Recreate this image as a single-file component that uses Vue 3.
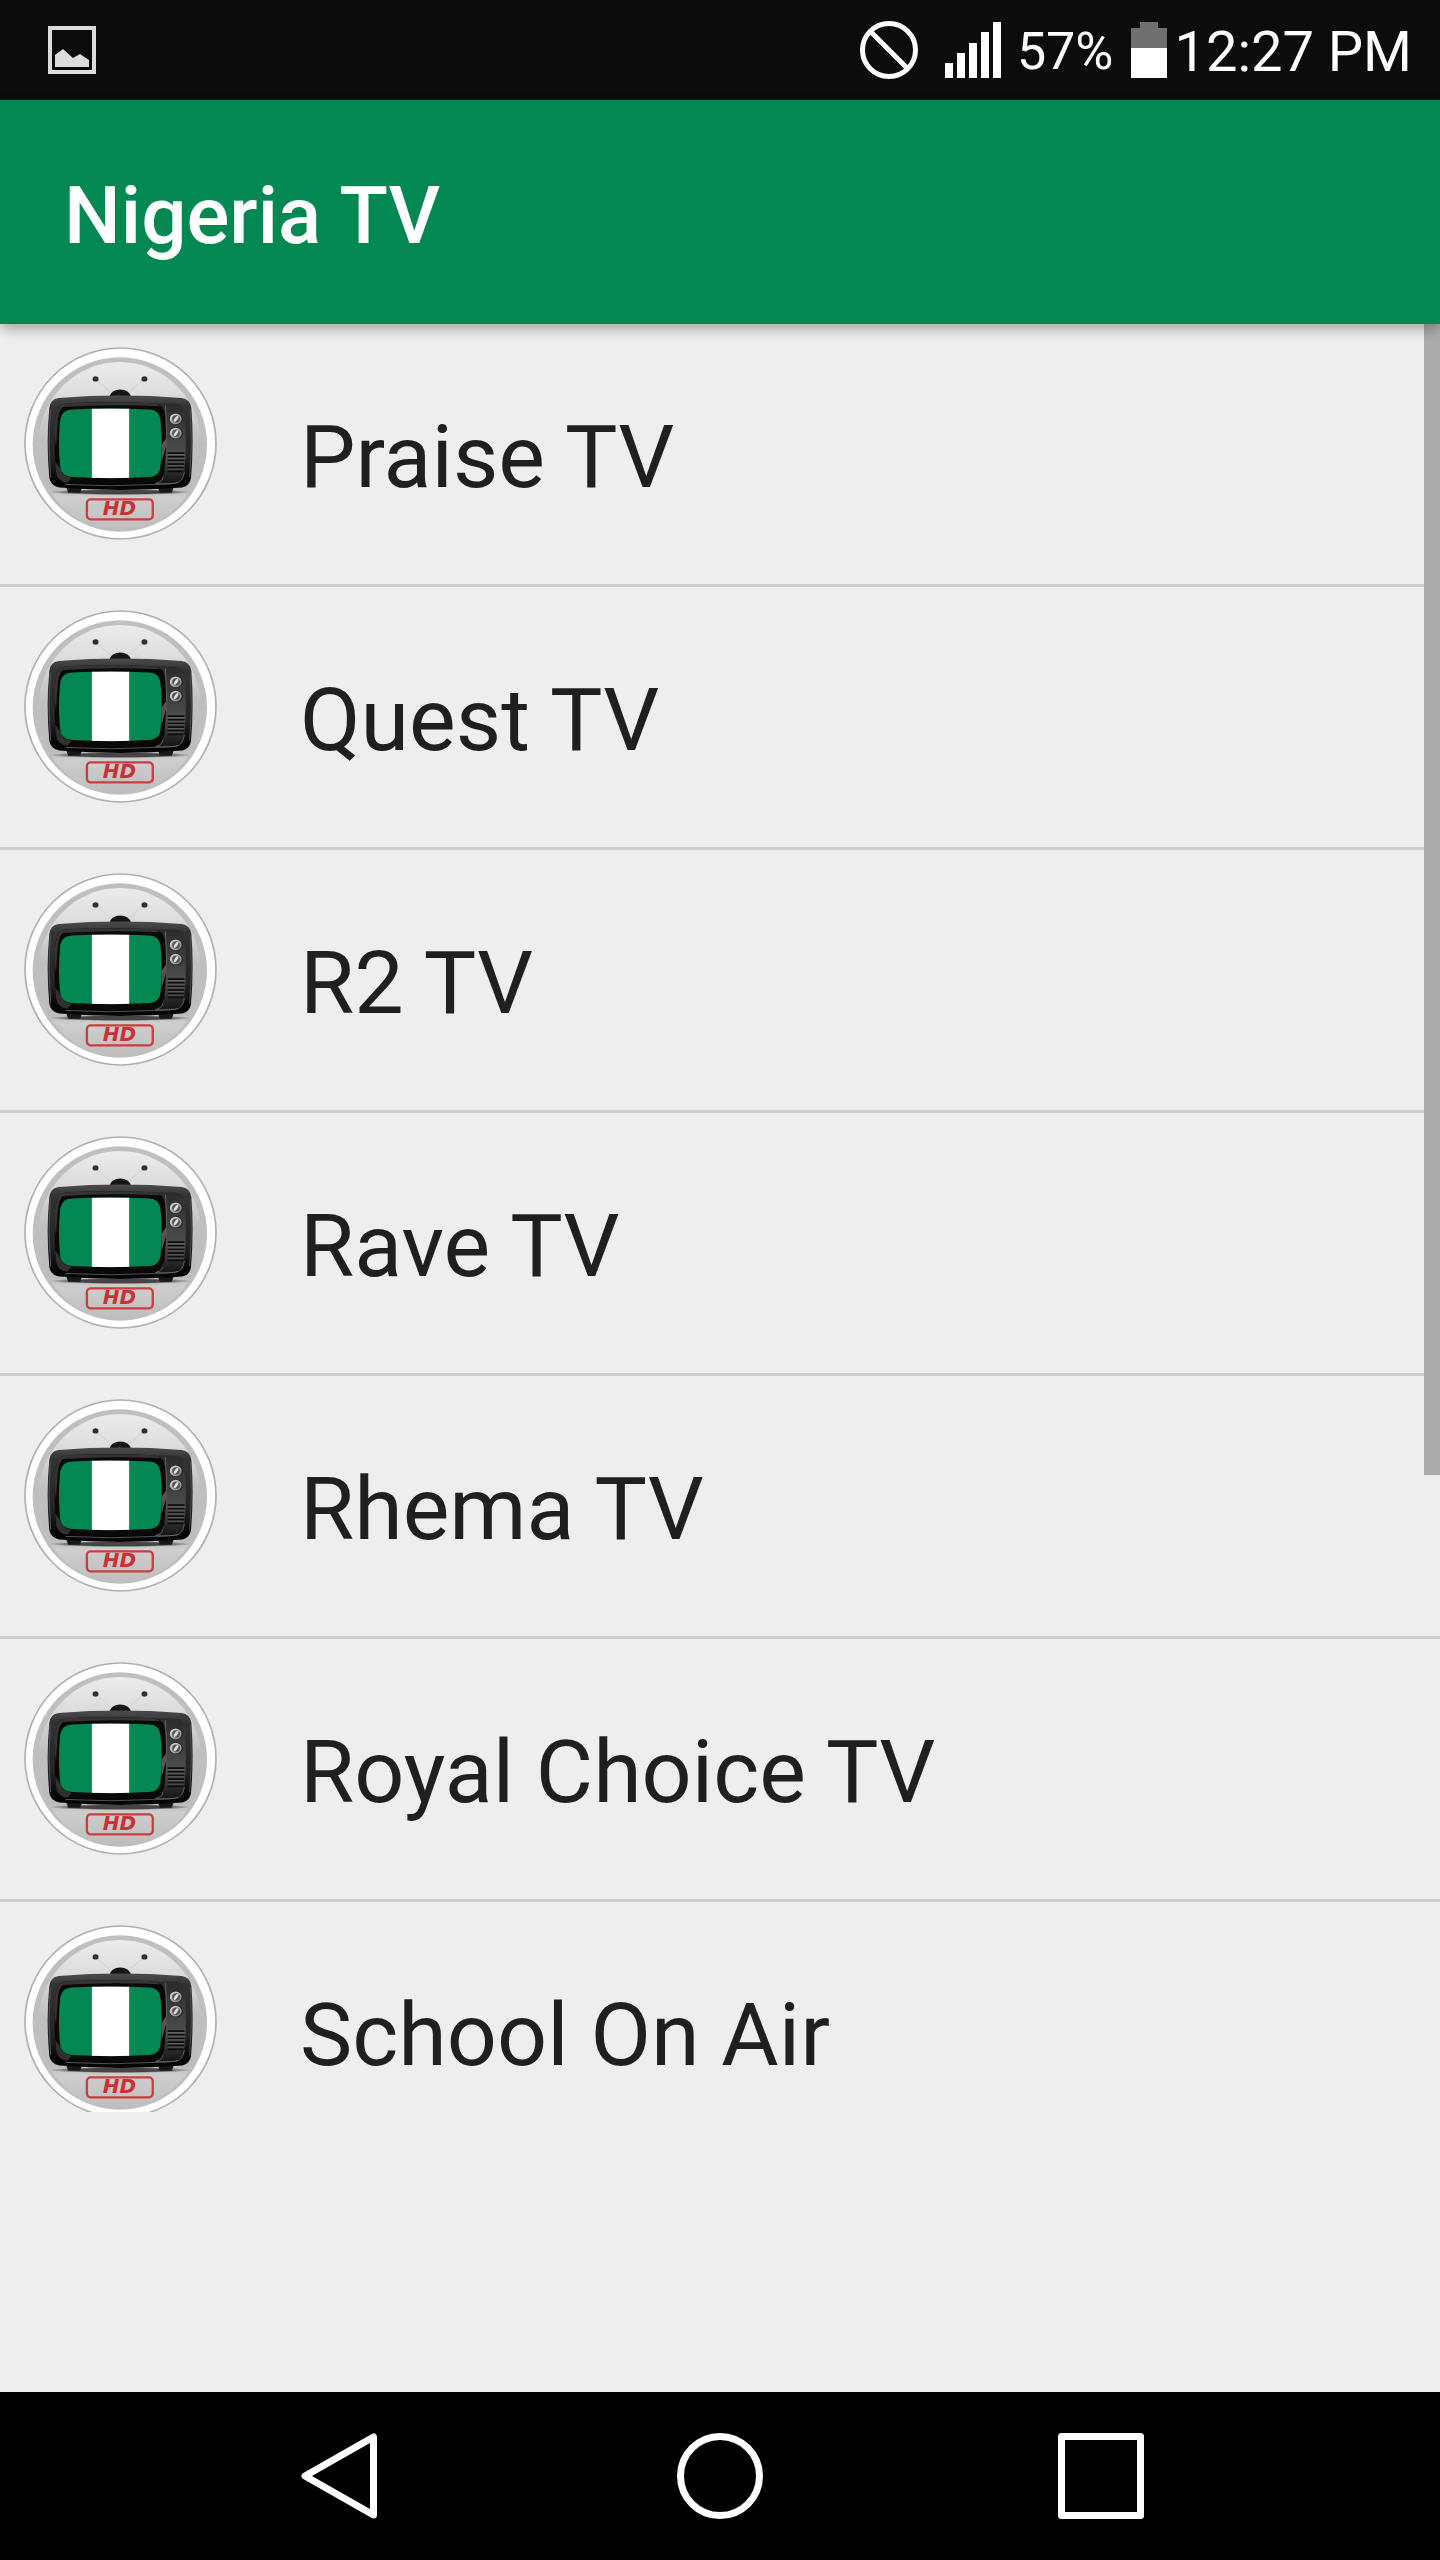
<script setup>
    import { ref } from "vue"

    // Channels shown in the list
    const channels = ref([
        "Praise TV",
        "Quest TV",
        "R2 TV",
        "Rave TV",
        "Rhema TV",
        "Royal Choice TV",
        "School On Air"
    ])

    const battery = ref(57)
    const time = ref("12:27 PM")
</script>

<template>
<div class="screen">
    <div class="status-bar">
        <svg class="picture" viewBox="0 0 48 48" aria-hidden="true">
            <rect x="2" y="2" width="44" height="44" fill="none" stroke="#dcdcdc" stroke-width="4" />
            <path d="M7 41V29L15 23L25 32L32 28L41 34V41Z" fill="#dcdcdc" />
        </svg>

        <div class="status-right">
            <svg class="blocked" viewBox="0 0 58 58" aria-hidden="true">
                <g fill="none" stroke="#fff" stroke-width="5">
                    <circle cx="29" cy="29" r="26.5" />
                    <path d="M10.5 10.5L47.5 47.5" />
                </g>
            </svg>
            <svg class="signal" viewBox="0 0 56 56" aria-hidden="true">
                <path d="M0 41h8v15h-8zM12 31h8v25h-8zM24 21h8v35h-8zM36 10h8v46h-8zM48 0h8v56h-8z" fill="#fff" />
            </svg>
            <span class="percent">{{ battery }}%</span>
            <svg class="battery" viewBox="0 0 36 56" aria-hidden="true">
                <path d="M9 0h18v6h9v20H0V6h9z" fill="#707070" />
                <path d="M0 26h36v30H0z" fill="#fff" />
            </svg>
            <span class="time">{{ time }}</span>
        </div>
    </div>

    <header class="app-bar">
        <h1>Nigeria TV</h1>
    </header>

    <!-- Gradients shared by every channel logo -->
    <svg class="defs" width="0" height="0" aria-hidden="true">
        <defs>
            <linearGradient id="disc" x1="0" y1="0" x2="0" y2="1">
                <stop offset="0" stop-color="#ececec" />
                <stop offset="0.2" stop-color="#dcdcdc" />
                <stop offset="0.45" stop-color="#c0c0c0" />
                <stop offset="0.75" stop-color="#bcbcbc" />
                <stop offset="0.8" stop-color="#cecece" />
                <stop offset="1" stop-color="#bdbdbd" />
            </linearGradient>
            <linearGradient id="body" x1="0" y1="0" x2="0" y2="1">
                <stop offset="0" stop-color="#4b4b4b" />
                <stop offset="0.12" stop-color="#333" />
                <stop offset="0.65" stop-color="#242424" />
                <stop offset="0.9" stop-color="#050505" />
            </linearGradient>
            <linearGradient id="panel" x1="0" y1="0" x2="0" y2="1">
                <stop offset="0" stop-color="#2b2b2b" />
                <stop offset="0.65" stop-color="#4d4d4d" />
                <stop offset="1" stop-color="#151515" />
            </linearGradient>
            <linearGradient id="knob" x1="0" y1="0" x2="1" y2="1">
                <stop offset="0" stop-color="#e4e4e4" />
                <stop offset="1" stop-color="#777" />
            </linearGradient>
            <radialGradient id="ground">
                <stop offset="0.6" stop-color="#444" />
                <stop offset="1" stop-color="#444" stop-opacity="0" />
            </radialGradient>
            <clipPath id="tube">
                <path d="M145 188Q260 181 376 188Q407 190 410 218Q418 290 410 361Q407 389 376 391Q260 398 145 391Q113 389 109 361Q101 290 109 218Q113 190 145 188Z" />
            </clipPath>
        </defs>
    </svg>

    <main class="content">
        <ul class="channels">
            <li v-for="channel in channels" :key="channel">
                <a href="#" class="channel">
                    <svg class="logo" viewBox="0 0 580 580" aria-hidden="true">
                        <circle cx="290" cy="290" r="287" fill="#fff" stroke="#b0b0b0" stroke-width="5" />
                        <circle cx="288" cy="293" r="262" fill="#bfbfbf" />
                        <ellipse cx="288" cy="299" rx="246" ry="254" fill="url(#disc)" />

                        <!-- aerial -->
                        <path d="M214 96L275 148M361 96L302 148" stroke="#c8c8c8" stroke-width="2" />
                        <ellipse cx="215" cy="96" rx="9" ry="8" fill="#303030" />
                        <ellipse cx="362" cy="96" rx="9" ry="8" fill="#303030" />
                        <path d="M256 152Q262 128 289 128Q316 128 323 152Z" fill="#151515" />

                        <!-- case -->
                        <ellipse cx="289" cy="436" rx="215" ry="9" fill="url(#ground)" />
                        <path d="M127 422h47l-5 16h-36zM403 422h47l-6 16h-36z" fill="#181818" />
                        <path d="M104 153Q289 139 474 153Q499 156 503 183Q511 285 502 393Q499 417 476 422Q289 437 106 422Q80 418 76 393Q66 285 76 183Q79 156 104 153Z" fill="url(#body)" />
                        <path d="M79 188Q71 290 80 392" fill="none" stroke="#505050" stroke-width="3" />
                        <path d="M500 188Q507 290 498 392" fill="none" stroke="#4a4a4a" stroke-width="3" />
                        <path d="M400 170H454Q480 172 483 196Q490 290 482 378Q478 407 454 409H400Z" fill="url(#panel)" />
                        <path d="M425 175Q434 290 416 398Q410 408 395 410H454Q478 407 482 376" fill="none" stroke="#777" stroke-width="2" />
                        <path d="M130 169Q260 163 390 169Q420 172 424 204Q431 290 422 374Q418 405 388 408Q260 415 130 408Q99 404 96 374Q88 290 96 204Q99 172 130 169Z" fill="#090909" />
                        <path d="M130 169Q260 163 390 169Q402 170 410 178Q260 171 117 180Q103 190 101 230L96 300Q88 250 96 204Q99 172 130 169Z" fill="#343434" />
                        <path d="M414 294L430 270V286L414 345Z" fill="#555" />
                        <path d="M94 344L112 370Q116 389 143 394L130 408Q99 404 96 374Z" fill="#303030" />
                        <path d="M125 413Q260 421 394 413Q435 414 463 407" fill="none" stroke="#777" stroke-width="2" />

                        <!-- flag on the tube -->
                        <g clip-path="url(#tube)">
                            <path d="M100 180h320v220H100z" fill="#048852" />
                            <path d="M204 180h112v220H204z" fill="#fff" />
                        </g>

                        <!-- knobs and speaker -->
                        <g v-for="y in [216, 259]" :key="y">
                            <ellipse cx="457" :cy="y" rx="20" ry="18" fill="#1a1a1a" />
                            <ellipse cx="456" :cy="y" rx="18" ry="16" fill="url(#knob)" />
                            <ellipse cx="457" :cy="y" rx="12" ry="11" fill="#555" />
                            <ellipse cx="457" :cy="y" rx="4" ry="11" fill="#ddd" :transform="`rotate(35 457 ${y})`" />
                        </g>
                        <path d="M432 319h50M432 330h50M432 341h50M432 352h49M432 363h48M432 374h47" stroke="#0c0c0c" stroke-width="5" />
                        <path d="M432 323h50M432 334h50M432 345h50M432 356h49M432 367h48" stroke="#707070" stroke-width="2" />

                        <!-- HD badge -->
                        <rect x="189" y="458" width="198" height="60" rx="11" fill="none" stroke="#cc3d40" stroke-width="7" />
                        <text class="hd" x="287" y="506" text-anchor="middle">HD</text>
                    </svg>
                    <span class="name">{{ channel }}</span>
                </a>
            </li>
        </ul>
        <div class="scroll-thumb"></div>
    </main>

    <div class="banner"></div>

    <nav class="nav-bar">
        <button type="button" aria-label="Back">
            <svg viewBox="0 0 86 86"><path d="M77.5 4V82L9 43Z" /></svg>
        </button>
        <button type="button" aria-label="Home">
            <svg viewBox="0 0 86 86"><circle cx="43" cy="43" r="39.5" /></svg>
        </button>
        <button type="button" aria-label="Recent apps">
            <svg viewBox="0 0 86 86"><rect x="3.5" y="3.5" width="79" height="79" /></svg>
        </button>
    </nav>
</div>
</template>

<style>
    body {
        margin: 0;
        background: #eee;
    }
</style>

<style scoped>
    .screen {
        display: flex;
        flex-direction: column;
        height: 100vh;
        background: #eee;
        font-family: Roboto, sans-serif;
    }

    svg {
        display: block;
        flex: none;
    }

    .defs {
        position: absolute;
    }

    .status-bar {
        flex: none;
        display: flex;
        align-items: center;
        justify-content: space-between;
        height: 100px;
        padding: 0 28px 0 48px;
        background: #0c0c0c;
        color: #fff;
    }

    .picture {
        width: 48px;
        height: 48px;
    }

    .status-right {
        display: flex;
        align-items: center;
    }

    .blocked {
        width: 58px;
        height: 58px;
        margin-right: 27px;
    }

    .signal {
        width: 56px;
        height: 56px;
        margin-right: 16px;
    }

    .percent,
    .time {
        padding-top: 4px;
        line-height: 64px;
    }

    .percent {
        font-size: 52px;
        margin-right: 18px;
    }

    .battery {
        width: 36px;
        height: 56px;
        margin-right: 7px;
    }

    .time {
        font-size: 56px;
    }

    .app-bar {
        flex: none;
        box-sizing: border-box;
        position: relative;
        z-index: 1;
        display: flex;
        align-items: center;
        height: 224px;
        padding: 8px 64px 0;
        background: #048852;
        box-shadow: 0 5px 12px rgba(0, 0, 0, 0.3);
        color: #fff;
    }

    .app-bar h1 {
        margin: 0;
        font-size: 80px;
        line-height: 96px;
        font-weight: 500;
    }

    .content {
        flex: 1;
        min-height: 0;
        position: relative;
    }

    .channels {
        height: 100%;
        margin: 0;
        padding: 0;
        list-style: none;
        overflow-y: auto;
        scrollbar-width: none;
    }

    .channels li + li {
        border-top: 3px solid #cecece;
    }

    .channel {
        display: flex;
        align-items: flex-start;
        gap: 83px;
        height: 237px;
        padding: 23px 24px 0;
        color: #1f1f1f;
        text-decoration: none;
    }

    .logo {
        width: 193px;
        height: 193px;
    }

    .hd {
        font: italic bold 60px "DejaVu Sans", sans-serif;
        fill: #cb3034;
    }

    .name {
        padding-top: 58px;
        font-size: 88px;
        line-height: 104px;
    }

    .scroll-thumb {
        position: absolute;
        top: 0;
        right: 0;
        width: 16px;
        height: 64.4%;
        background: #acacac;
    }

    /* Empty ad slot under the list */
    .banner {
        flex: none;
        height: 280px;
    }

    .nav-bar {
        flex: none;
        display: grid;
        grid-template-columns: repeat(3, 1fr);
        height: 168px;
        padding: 0 148px;
        background: #000;
    }

    .nav-bar button {
        display: flex;
        align-items: center;
        justify-content: center;
        padding: 0;
        border: 0;
        background: none;
        cursor: pointer;
    }

    .nav-bar svg {
        width: 86px;
        height: 86px;
        fill: none;
        stroke: #fff;
        stroke-width: 7;
        stroke-linejoin: round;
    }
</style>
